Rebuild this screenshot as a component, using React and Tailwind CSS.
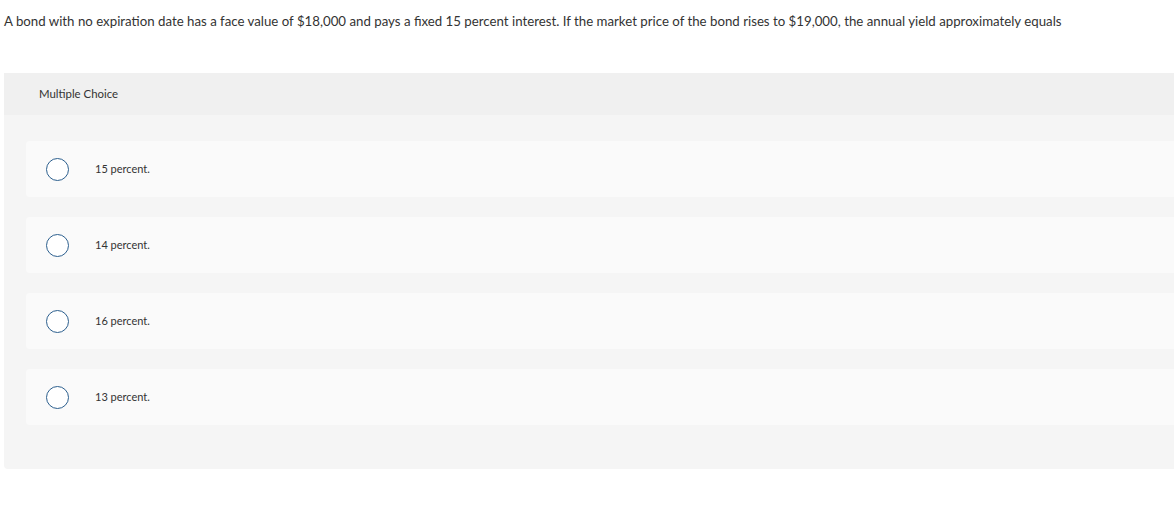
const options = ['15 percent.', '14 percent.', '16 percent.', '13 percent.'];

export default function App() {
  return (
    <div className="min-h-[519px] bg-white text-[#333] font-['Lato','Open_Sans',sans-serif]">
      {/* Question */}
      <p className="pl-1 pt-[13px] text-[13.25px] leading-[16px] text-[#333]">
        A bond with no expiration date has a face value of $18,000 and pays a fixed 15 percent interest. If the market price of the bond rises to $19,000, the annual yield approximately equals
      </p>

      {/* Answer panel */}
      <div className="ml-1 mt-[44px] rounded-bl bg-[#f5f5f5]">
        <div className="h-[42px] flex items-center pl-[35px] bg-[#f0f0f0] text-[11.4px] text-[#333]">
          Multiple Choice
        </div>
        <div className="flex flex-col gap-5 pl-[22px] pt-[26px] pb-[44px]">
          {options.map((o) => (
            <div key={o} className="h-14 flex items-center rounded-l bg-[#fafafa]">
              <span className="ml-5 w-[23px] h-[23px] rounded-full border-[1.5px] border-[#2c5f8e] bg-white" />
              <span className="ml-[26px] text-[11px] text-[#333]">{o}</span>
            </div>
          ))}
        </div>
      </div>
    </div>
  );
}
